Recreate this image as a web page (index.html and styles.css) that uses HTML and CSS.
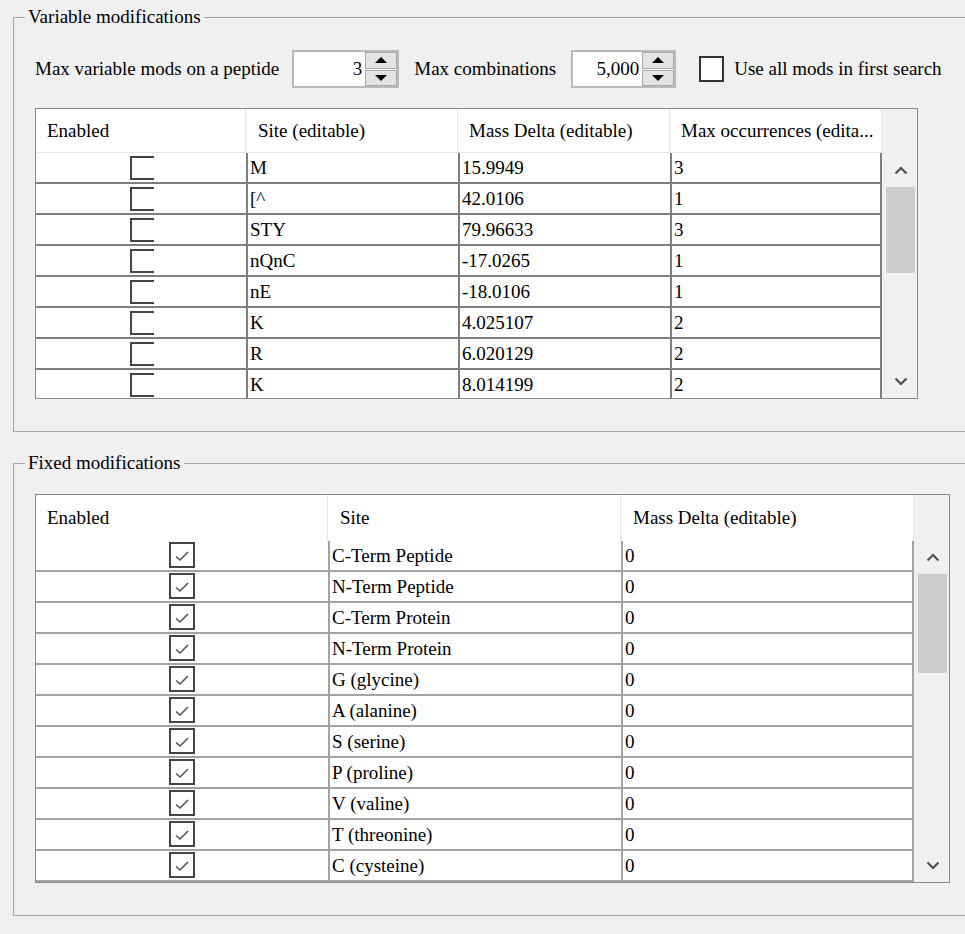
FILE: index.html
```html
<!DOCTYPE html>
<html>
<head>
<meta charset="utf-8">
<link rel="stylesheet" href="styles.css">
</head>
<body>
<div class="page">
  <fieldset class="group group-var">
    <legend>Variable modifications</legend>
    <div class="controls">
      <span class="lbl">Max variable mods on a peptide</span>
      <div class="spin spin-a">
        <span class="spin-val">3</span>
        <div class="spin-btns"><span class="sbtn"><i class="tri-up"></i></span><span class="sbtn"><i class="tri-down"></i></span></div>
      </div>
      <span class="lbl lbl-gap">Max combinations</span>
      <div class="spin spin-b">
        <span class="spin-val">5,000</span>
        <div class="spin-btns"><span class="sbtn"><i class="tri-up"></i></span><span class="sbtn"><i class="tri-down"></i></span></div>
      </div>
      <label class="chk"><span class="chk-box"></span><span>Use all mods in first search</span></label>
    </div>

    <div class="grid grid-var">
      <div class="grid-main">
        <div class="head">
          <div class="hc">Enabled</div>
          <div class="hc">Site (editable)</div>
          <div class="hc">Mass Delta (editable)</div>
          <div class="hc">Max occurrences (edita...</div>
        </div>
        <div class="gbody">
          <div class="row"><div class="c cb"><span class="ubox"></span></div><div class="c">M</div><div class="c">15.9949</div><div class="c">3</div></div>
          <div class="row"><div class="c cb"><span class="ubox"></span></div><div class="c">[^</div><div class="c">42.0106</div><div class="c">1</div></div>
          <div class="row"><div class="c cb"><span class="ubox"></span></div><div class="c">STY</div><div class="c">79.96633</div><div class="c">3</div></div>
          <div class="row"><div class="c cb"><span class="ubox"></span></div><div class="c">nQnC</div><div class="c">-17.0265</div><div class="c">1</div></div>
          <div class="row"><div class="c cb"><span class="ubox"></span></div><div class="c">nE</div><div class="c">-18.0106</div><div class="c">1</div></div>
          <div class="row"><div class="c cb"><span class="ubox"></span></div><div class="c">K</div><div class="c">4.025107</div><div class="c">2</div></div>
          <div class="row"><div class="c cb"><span class="ubox"></span></div><div class="c">R</div><div class="c">6.020129</div><div class="c">2</div></div>
          <div class="row"><div class="c cb"><span class="ubox"></span></div><div class="c">K</div><div class="c">8.014199</div><div class="c">2</div></div>
        </div>
      </div>
      <div class="vscroll">
        <div class="vs-corner"></div>
        <div class="vs-track">
          <div class="vs-btn"><svg width="14" height="9" viewBox="0 0 14 9"><path d="M1.5 7.5 L7 2 L12.5 7.5" fill="none" stroke="#505050" stroke-width="2.2"/></svg></div>
          <div class="vs-thumb"></div>
          <div class="vs-space"></div>
          <div class="vs-btn"><svg width="14" height="9" viewBox="0 0 14 9"><path d="M1.5 1.5 L7 7 L12.5 1.5" fill="none" stroke="#505050" stroke-width="2.2"/></svg></div>
        </div>
      </div>
    </div>
  </fieldset>

  <fieldset class="group group-fix">
    <legend>Fixed modifications</legend>
    <div class="grid grid-fix">
      <div class="grid-main">
        <div class="head">
          <div class="hc">Enabled</div>
          <div class="hc">Site</div>
          <div class="hc">Mass Delta (editable)</div>
        </div>
        <div class="gbody">
          <div class="row"><div class="c cb"><span class="cbox"><svg width="22" height="22" viewBox="0 0 22 22"><path d="M5 12.5 L9 16 L17 8" fill="none" stroke="#555" stroke-width="1.6"/></svg></span></div><div class="c">C-Term Peptide</div><div class="c">0</div></div>
          <div class="row"><div class="c cb"><span class="cbox"><svg width="22" height="22" viewBox="0 0 22 22"><path d="M5 12.5 L9 16 L17 8" fill="none" stroke="#555" stroke-width="1.6"/></svg></span></div><div class="c">N-Term Peptide</div><div class="c">0</div></div>
          <div class="row"><div class="c cb"><span class="cbox"><svg width="22" height="22" viewBox="0 0 22 22"><path d="M5 12.5 L9 16 L17 8" fill="none" stroke="#555" stroke-width="1.6"/></svg></span></div><div class="c">C-Term Protein</div><div class="c">0</div></div>
          <div class="row"><div class="c cb"><span class="cbox"><svg width="22" height="22" viewBox="0 0 22 22"><path d="M5 12.5 L9 16 L17 8" fill="none" stroke="#555" stroke-width="1.6"/></svg></span></div><div class="c">N-Term Protein</div><div class="c">0</div></div>
          <div class="row"><div class="c cb"><span class="cbox"><svg width="22" height="22" viewBox="0 0 22 22"><path d="M5 12.5 L9 16 L17 8" fill="none" stroke="#555" stroke-width="1.6"/></svg></span></div><div class="c">G (glycine)</div><div class="c">0</div></div>
          <div class="row"><div class="c cb"><span class="cbox"><svg width="22" height="22" viewBox="0 0 22 22"><path d="M5 12.5 L9 16 L17 8" fill="none" stroke="#555" stroke-width="1.6"/></svg></span></div><div class="c">A (alanine)</div><div class="c">0</div></div>
          <div class="row"><div class="c cb"><span class="cbox"><svg width="22" height="22" viewBox="0 0 22 22"><path d="M5 12.5 L9 16 L17 8" fill="none" stroke="#555" stroke-width="1.6"/></svg></span></div><div class="c">S (serine)</div><div class="c">0</div></div>
          <div class="row"><div class="c cb"><span class="cbox"><svg width="22" height="22" viewBox="0 0 22 22"><path d="M5 12.5 L9 16 L17 8" fill="none" stroke="#555" stroke-width="1.6"/></svg></span></div><div class="c">P (proline)</div><div class="c">0</div></div>
          <div class="row"><div class="c cb"><span class="cbox"><svg width="22" height="22" viewBox="0 0 22 22"><path d="M5 12.5 L9 16 L17 8" fill="none" stroke="#555" stroke-width="1.6"/></svg></span></div><div class="c">V (valine)</div><div class="c">0</div></div>
          <div class="row"><div class="c cb"><span class="cbox"><svg width="22" height="22" viewBox="0 0 22 22"><path d="M5 12.5 L9 16 L17 8" fill="none" stroke="#555" stroke-width="1.6"/></svg></span></div><div class="c">T (threonine)</div><div class="c">0</div></div>
          <div class="row"><div class="c cb"><span class="cbox"><svg width="22" height="22" viewBox="0 0 22 22"><path d="M5 12.5 L9 16 L17 8" fill="none" stroke="#555" stroke-width="1.6"/></svg></span></div><div class="c">C (cysteine)</div><div class="c">0</div></div>
        </div>
      </div>
      <div class="vscroll">
        <div class="vs-corner"></div>
        <div class="vs-track">
          <div class="vs-btn"><svg width="14" height="9" viewBox="0 0 14 9"><path d="M1.5 7.5 L7 2 L12.5 7.5" fill="none" stroke="#505050" stroke-width="2.2"/></svg></div>
          <div class="vs-thumb"></div>
          <div class="vs-space"></div>
          <div class="vs-btn"><svg width="14" height="9" viewBox="0 0 14 9"><path d="M1.5 1.5 L7 7 L12.5 1.5" fill="none" stroke="#505050" stroke-width="2.2"/></svg></div>
        </div>
      </div>
    </div>
  </fieldset>
</div>
</body>
</html>
```

FILE: styles.css
```css
* { box-sizing: border-box; }
html, body {
  margin: 0;
  padding: 0;
  background: #f0f0f0;
  overflow: hidden;
}
body {
  font-family: "Liberation Serif", "Times New Roman", serif;
  font-size: 19px;
  color: #000;
}
.page {
  width: 965px;
  height: 934px;
  overflow: hidden;
  padding: 6px 0 0 13px;
}
.group {
  margin: 0;
  width: 1000px;
  border: 1px solid #a6a6a6;
  padding: 22px 0 32px 21px;
  min-width: 0;
  font-family: "Liberation Serif", "Times New Roman", serif;
}
.group legend {
  margin-left: -10px;
  padding: 0 3px 0 3px;
  line-height: 22px;
  height: 22px;
}
.group-fix {
  margin-top: 20px;
  padding: 20px 0 32px 21px;
}

/* controls row */
.controls {
  display: flex;
  align-items: center;
  height: 38px;
  margin-bottom: 20px;
}
.lbl { white-space: nowrap; }
.spin {
  display: flex;
  align-items: stretch;
  height: 38px;
  background: #fff;
  border: 2px solid #b9b9b9;
  margin-left: 13px;
}
.spin-a { width: 107px; }
.spin-b { width: 105px; margin-left: 15px; }
.lbl-gap { margin-left: 15px; }
.spin-val {
  flex: 1;
  text-align: right;
  padding-right: 3px;
  line-height: 34px;
}
.spin-btns {
  width: 32px;
  display: flex;
  flex-direction: column;
  gap: 1px;
}
.sbtn {
  flex: 1;
  background: #e3e3e3;
  border: 1px solid #a9a9a9;
  display: flex;
  align-items: center;
  justify-content: center;
}
.tri-up {
  width: 0; height: 0;
  border-left: 6px solid transparent;
  border-right: 6px solid transparent;
  border-bottom: 6px solid #000;
}
.tri-down {
  width: 0; height: 0;
  border-left: 6px solid transparent;
  border-right: 6px solid transparent;
  border-top: 6px solid #000;
}
.chk {
  display: flex;
  align-items: center;
  margin-left: 23px;
  white-space: nowrap;
}
.chk-box {
  width: 25px;
  height: 26px;
  background: #fff;
  border: 2px solid #333;
  margin-right: 10px;
}

/* grids */
.grid {
  display: flex;
  border: 1px solid #8a8a8a;
  background: #f0f0f0;
}
.grid-var { width: 883px; }
.grid-fix { width: 915px; }
.head {
  display: grid;
  background: #fff;
}
.hc {
  padding-left: 11px;
  white-space: nowrap;
  overflow: hidden;
  border-right: 1px solid #e5e5e5;
  display: flex;
  align-items: center;
}
.gbody { overflow: hidden; }
.row { display: grid; height: 31px; }
.c {
  background: #fff;
  padding-left: 2px;
  white-space: nowrap;
  overflow: hidden;
  display: flex;
  align-items: center;
  line-height: 1;
}
.cb { justify-content: center; padding-left: 0; }

/* variable grid */
.grid-var .head, .grid-var .row { grid-template-columns: 210px 212px 212px 212px; }
.grid-var .head { height: 44px; border-bottom: 1px solid #e5e5e5; }
.grid-var .gbody { height: 245px; }
.grid-var .c { border-bottom: 2px solid #7e7e7e; }
.grid-var .c + .c { border-left: 2px solid #7e7e7e; }
.grid-var .c:last-child { border-right: 2px solid #7e7e7e; }
.grid-var .hc:nth-child(2) { padding-left: 12px; }
.grid-var .cb { padding-left: 1px; }

/* fixed grid */
.grid-fix .head, .grid-fix .row { grid-template-columns: 292px 293px 293px; }
.grid-fix .head { height: 46px; }
.grid-fix .gbody { height: 341px; }
.grid-fix .c { border-bottom: 2px solid #a3a3a3; }
.grid-fix .c + .c { border-left: 2px solid #a3a3a3; }
.grid-fix .c:last-child { border-right: 2px solid #a3a3a3; }
.grid-fix .hc + .hc { padding-left: 12px; }
.grid-fix .cb { padding-left: 0; padding-bottom: 1px; }

.ubox {
  width: 24px;
  height: 24px;
  border: 2px solid #444;
  border-right: none;
}
.cbox {
  width: 26px;
  height: 26px;
  background: #fff;
  border: 2px solid #454545;
  display: flex;
  align-items: center;
  justify-content: center;
}

/* scrollbar */
.vscroll {
  width: 35px;
  display: flex;
  flex-direction: column;
}
.grid-var .vs-corner { height: 44px; }
.grid-fix .vs-corner { height: 45px; }
.vs-track {
  flex: 1;
  display: flex;
  flex-direction: column;
  padding: 0 2px 0 4px;
}
.vs-btn {
  height: 34px;
  display: flex;
  align-items: center;
  justify-content: center;
}
.vs-thumb { background: #cdcdcd; }
.grid-var .vs-thumb { height: 86px; }
.grid-fix .vs-thumb { height: 99px; }
.vs-space { flex: 1; }
```
